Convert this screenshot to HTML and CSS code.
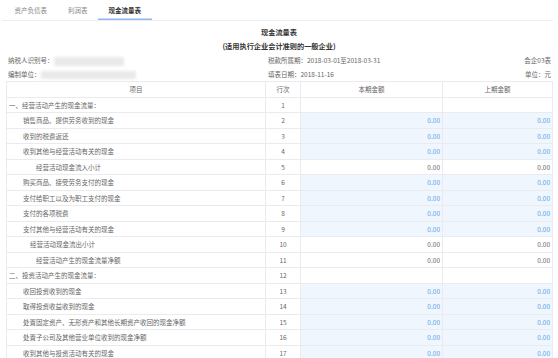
FILE: index.html
```html
<!DOCTYPE html>
<html lang="zh-CN">
<head>
    <meta charset="UTF-8">
    <meta name="viewport" content="width=device-width, initial-scale=1.0">
    <title>现金流量表</title>
    <link rel="stylesheet" href="styles.css">
</head>
<body>

    <div class="tabs">
        <span class="tab">资产负债表</span>
        <span class="tab">利润表</span>
        <span class="tab active">现金流量表</span>
    </div>

    <div class="report">
        <h2 class="title">现金流量表</h2>
        <h3 class="subtitle">(适用执行企业会计准则的一般企业)</h3>

        <div class="info">
            <div>纳税人识别号：<span class="masked masked-id"></span></div>
            <div>税款所属期：2018-03-01至2018-03-31</div>
            <div class="right">会企03表</div>
            <div>编制单位：<span class="masked masked-unit"></span></div>
            <div>填表日期：2018-11-16</div>
            <div class="right">单位：元</div>
        </div>

        <table class="sheet">
            <colgroup>
                <col class="col-item">
                <col class="col-no">
                <col class="col-cur">
                <col class="col-prev">
            </colgroup>
            <thead>
                <tr>
                    <th>项目</th>
                    <th>行次</th>
                    <th>本期金额</th>
                    <th>上期金额</th>
                </tr>
            </thead>
            <tbody>
                <tr>
                    <td>一、经营活动产生的现金流量：</td>
                    <td class="no">1</td>
                    <td></td>
                    <td></td>
                </tr>
                <tr>
                    <td class="lv1">销售商品、提供劳务收到的现金</td>
                    <td class="no">2</td>
                    <td class="edit">0.00</td>
                    <td class="edit">0.00</td>
                </tr>
                <tr>
                    <td class="lv1">收到的税费返还</td>
                    <td class="no">3</td>
                    <td class="edit">0.00</td>
                    <td class="edit">0.00</td>
                </tr>
                <tr>
                    <td class="lv1">收到其他与经营活动有关的现金</td>
                    <td class="no">4</td>
                    <td class="edit">0.00</td>
                    <td class="edit">0.00</td>
                </tr>
                <tr>
                    <td class="lv2">经营活动现金流入小计</td>
                    <td class="no">5</td>
                    <td class="calc">0.00</td>
                    <td class="calc">0.00</td>
                </tr>
                <tr>
                    <td class="lv1">购买商品、接受劳务支付的现金</td>
                    <td class="no">6</td>
                    <td class="edit">0.00</td>
                    <td class="edit">0.00</td>
                </tr>
                <tr>
                    <td class="lv1">支付给职工以及为职工支付的现金</td>
                    <td class="no">7</td>
                    <td class="edit">0.00</td>
                    <td class="edit">0.00</td>
                </tr>
                <tr>
                    <td class="lv1">支付的各项税费</td>
                    <td class="no">8</td>
                    <td class="edit">0.00</td>
                    <td class="edit">0.00</td>
                </tr>
                <tr>
                    <td class="lv1">支付其他与经营活动有关的现金</td>
                    <td class="no">9</td>
                    <td class="edit">0.00</td>
                    <td class="edit">0.00</td>
                </tr>
                <tr>
                    <td class="lv2b">经营活动现金流出小计</td>
                    <td class="no">10</td>
                    <td class="calc">0.00</td>
                    <td class="calc">0.00</td>
                </tr>
                <tr>
                    <td class="lv2">经营活动产生的现金流量净额</td>
                    <td class="no">11</td>
                    <td class="calc">0.00</td>
                    <td class="calc">0.00</td>
                </tr>
                <tr>
                    <td>二、投资活动产生的现金流量：</td>
                    <td class="no">12</td>
                    <td></td>
                    <td></td>
                </tr>
                <tr>
                    <td class="lv1">收回投资收到的现金</td>
                    <td class="no">13</td>
                    <td class="edit">0.00</td>
                    <td class="edit">0.00</td>
                </tr>
                <tr>
                    <td class="lv1">取得投资收益收到的现金</td>
                    <td class="no">14</td>
                    <td class="edit">0.00</td>
                    <td class="edit">0.00</td>
                </tr>
                <tr>
                    <td class="lv1">处置固定资产、无形资产和其他长期资产收回的现金净额</td>
                    <td class="no">15</td>
                    <td class="edit">0.00</td>
                    <td class="edit">0.00</td>
                </tr>
                <tr>
                    <td class="lv1">处置子公司及其他营业单位收到的现金净额</td>
                    <td class="no">16</td>
                    <td class="edit">0.00</td>
                    <td class="edit">0.00</td>
                </tr>
                <tr>
                    <td class="lv1">收到其他与投资活动有关的现金</td>
                    <td class="no">17</td>
                    <td class="edit">0.00</td>
                    <td class="edit">0.00</td>
                </tr>
            </tbody>
        </table>
    </div>

</body>
</html>
```

FILE: styles.css
```css
body {
    margin: 0;
    font-family: "Noto Sans CJK SC", "Noto Sans", sans-serif;
    font-size: 6.5px;
    color: #666;
    background: #fff;
    overflow: hidden;
}

.tabs {
    display: flex;
    height: 20px;
    margin: 0 5px 0 2px;
    padding-left: 2px;
    border-bottom: 1px solid #eceef0;
}

.tab {
    padding: 0 10.5px;
    line-height: 20px;
    color: #888;
}

.tab.active {
    color: #333;
    font-weight: bold;
    box-shadow: inset 0 -1.5px 0 #8fb8f2;
}

.report {
    padding: 0 6px;
}

.title, .subtitle {
    margin: 0;
    text-align: center;
    font-size: 7.2px;
    line-height: 14px;
    color: #333;
    font-weight: bold;
}

.title {
    margin-top: 4px;
}

.info {
    display: grid;
    grid-template-columns: 260px 1fr auto;
    padding: 0 1px 0 2px;
    line-height: 14px;
    color: #666;
}

.info .right {
    text-align: right;
}

.masked {
    display: inline-block;
    vertical-align: middle;
    height: 9px;
    background: #e9e9e9;
    filter: blur(1.5px);
}

.masked-id {
    width: 70px;
}

.masked-unit {
    width: 95px;
    height: 8px;
}

.sheet {
    width: 546px;
    border-collapse: collapse;
    table-layout: fixed;
}

.col-item { width: 259px; }
.col-no { width: 35px; }
.col-cur { width: 142px; }
.col-prev { width: 110px; }

.sheet th, .sheet td {
    height: 14.5px;
    padding: 0 2px;
    border: 1px solid #e9ebee;
    line-height: 14px;
    white-space: nowrap;
    overflow: hidden;
}

.sheet th {
    font-weight: normal;
    color: #666;
    text-align: center;
}

.sheet td.no {
    text-align: center;
}

.sheet td.lv1 { padding-left: 16px; }
.sheet td.lv2 { padding-left: 29px; }
.sheet td.lv2b { padding-left: 23px; }

.sheet td.edit {
    background: #f0f6fe;
    color: #5aa2e6;
    text-align: right;
}

.sheet td.calc {
    text-align: right;
    color: #666;
}
```
